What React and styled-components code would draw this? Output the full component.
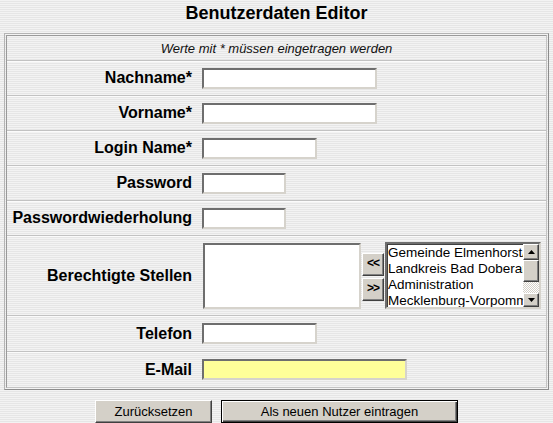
import React from 'react';
import styled, { createGlobalStyle } from 'styled-components';

const GlobalStyle = createGlobalStyle`
  html, body {
    margin: 0;
    padding: 0;
  }
  body {
    font-family: "Liberation Sans", Arial, sans-serif;
    color: #000;
    background: repeating-linear-gradient(
      to bottom,
      #f3f3f3 0px,
      #f3f3f3 1px,
      #e6e6e6 1px,
      #e6e6e6 2px
    );
    width: 553px;
    height: 423px;
    overflow: hidden;
  }
`;

const Page = styled.div`
  width: 553px;
  display: flex;
  flex-direction: column;
  align-items: center;
`;

const Title = styled.h1`
  margin: 0;
  height: 33px;
  padding-top: 2px;
  box-sizing: border-box;
  font-size: 18px;
  font-weight: bold;
  line-height: 22px;
  text-align: center;
`;

const Frame = styled.div`
  width: 545px;
  box-sizing: border-box;
  border: 1px solid #b4b4b4;
  border-right-color: #8c8c8c;
  border-bottom-color: #8c8c8c;
  padding: 1px;
`;

const Inner = styled.div`
  border: 1px solid #c4c4c4;
  border-top-color: #9a9a9a;
  border-left-color: #9a9a9a;
`;

const Note = styled.div`
  height: 24px;
  display: flex;
  align-items: center;
  justify-content: center;
  font-size: 13px;
  font-style: italic;
  color: #111;
`;

const Row = styled.div`
  display: grid;
  grid-template-columns: 190px 1fr;
  align-items: center;
  height: ${p => p.$h}px;
  box-sizing: border-box;
  border-top: 1px solid #c2c2c2;
  box-shadow: inset 0 1px 0 #fbfbfb;
`;

const Label = styled.label`
  text-align: right;
  font-size: 16px;
  font-weight: bold;
  padding-right: 5px;
  white-space: nowrap;
`;

const Field = styled.div`
  display: flex;
  align-items: center;
  padding-left: 5px;
`;

const Input = styled.input`
  width: ${p => p.$w}px;
  height: 21px;
  box-sizing: border-box;
  margin: 0;
  padding: 1px 3px;
  border: 2px solid;
  border-color: #6e6e6e #d6d3cc #d6d3cc #6e6e6e;
  background: ${p => (p.$yellow ? '#ffff99' : '#fff')};
  font-family: "Liberation Sans", Arial, sans-serif;
  font-size: 13px;
  outline: none;
`;

const TextBox = styled.div`
  width: 158px;
  height: 66px;
  box-sizing: border-box;
  margin-left: 1px;
  background: #fff;
  border: 2px solid;
  border-color: #6e6e6e #d6d3cc #d6d3cc #6e6e6e;
`;

const MoveButtons = styled.div`
  display: flex;
  flex-direction: column;
  gap: 2px;
  margin-left: 1px;
  margin-top: 2px;
`;

const SmallButton = styled.button`
  width: 22px;
  height: 23px;
  box-sizing: border-box;
  margin: 0;
  padding: 0 0 2px;
  background: #d4d0c8;
  border: 1px solid;
  border-color: #fff #404040 #404040 #fff;
  box-shadow: inset -1px -1px 0 #808080;
  font-family: "Liberation Sans", Arial, sans-serif;
  font-size: 12px;
  font-weight: bold;
  letter-spacing: -1px;
  color: #000;
`;

const ListBox = styled.div`
  width: 156px;
  height: 67px;
  box-sizing: border-box;
  margin-left: 1px;
  display: flex;
  background: #fff;
  border: 2px solid;
  border-color: #6e6e6e #d6d3cc #d6d3cc #6e6e6e;
  box-shadow: inset 1px 1px 0 #404040;
`;

const Items = styled.ul`
  flex: 1;
  min-width: 0;
  margin: 0;
  padding: 1px 0 0 1px;
  list-style: none;
  overflow: hidden;
`;

const Item = styled.li`
  font-size: 13.5px;
  line-height: 16px;
  white-space: nowrap;
  overflow: hidden;
`;

const Scrollbar = styled.div`
  width: 16px;
  flex-shrink: 0;
  display: flex;
  flex-direction: column;
  background: repeating-conic-gradient(#d4d0c8 0 25%, #ffffff 0 50%) 0 0 / 2px 2px;
`;

const ScrollPart = styled.div`
  height: ${p => p.$h}px;
  box-sizing: border-box;
  background: #d4d0c8;
  border: 1px solid;
  border-color: #fff #404040 #404040 #fff;
  box-shadow: inset -1px -1px 0 #808080;
  display: flex;
  align-items: center;
  justify-content: center;
`;

const Track = styled.div`
  flex: 1;
`;

const Arrow = ({ down }) => (
  <svg width="7" height="4" viewBox="0 0 7 4">
    <polygon points={down ? '0,0 7,0 3.5,4' : '0,4 7,4 3.5,0'} fill="#000" />
  </svg>
);

const Actions = styled.div`
  display: flex;
  justify-content: center;
  gap: 9px;
  margin-top: 10px;
`;

const Button = styled.button`
  width: ${p => p.$w}px;
  height: 23px;
  box-sizing: border-box;
  margin: 0;
  background: #d4d0c8;
  border: 1px solid;
  border-color: ${p => (p.$default ? '#000' : '#fff #404040 #404040 #fff')};
  box-shadow: ${p =>
    p.$default
      ? 'inset 1px 1px 0 #fff, inset -1px -1px 0 #404040, inset -2px -2px 0 #808080'
      : 'inset -1px -1px 0 #808080'};
  font-family: "Liberation Sans", Arial, sans-serif;
  font-size: 13px;
  color: #000;
`;

const stellen = [
  'Gemeinde Elmenhorst/Lichtenhagen',
  'Landkreis Bad Doberan',
  'Administration',
  'Mecklenburg-Vorpommern',
];

const fields = [
  { label: 'Nachname*', w: 175 },
  { label: 'Vorname*', w: 175 },
  { label: 'Login Name*', w: 115 },
  { label: 'Password', w: 84, type: 'password' },
  { label: 'Passwordwiederholung', w: 84, type: 'password' },
];

export default function App() {
  return (
    <>
      <GlobalStyle />
      <Page>
        <Title>Benutzerdaten Editor</Title>
        <Frame>
          <Inner>
            <Note>Werte mit * müssen eingetragen werden</Note>
            {fields.map(f => (
              <Row key={f.label} $h={35}>
                <Label>{f.label}</Label>
                <Field>
                  <Input $w={f.w} type={f.type || 'text'} />
                </Field>
              </Row>
            ))}
            <Row $h={80}>
              <Label>Berechtigte Stellen</Label>
              <Field>
                <TextBox />
                <MoveButtons>
                  <SmallButton>&lt;&lt;</SmallButton>
                  <SmallButton>&gt;&gt;</SmallButton>
                </MoveButtons>
                <ListBox>
                  <Items>
                    {stellen.map(s => (
                      <Item key={s}>{s}</Item>
                    ))}
                  </Items>
                  <Scrollbar>
                    <ScrollPart $h={16}>
                      <Arrow />
                    </ScrollPart>
                    <ScrollPart $h={22} />
                    <Track />
                    <ScrollPart $h={14}>
                      <Arrow down />
                    </ScrollPart>
                  </Scrollbar>
                </ListBox>
              </Field>
            </Row>
            <Row $h={36}>
              <Label>Telefon</Label>
              <Field>
                <Input $w={115} />
              </Field>
            </Row>
            <Row $h={36}>
              <Label>E-Mail</Label>
              <Field>
                <Input $w={205} $yellow />
              </Field>
            </Row>
          </Inner>
        </Frame>
        <Actions>
          <Button $w={117}>Zurücksetzen</Button>
          <Button $w={237} $default>
            Als neuen Nutzer eintragen
          </Button>
        </Actions>
      </Page>
    </>
  );
}
